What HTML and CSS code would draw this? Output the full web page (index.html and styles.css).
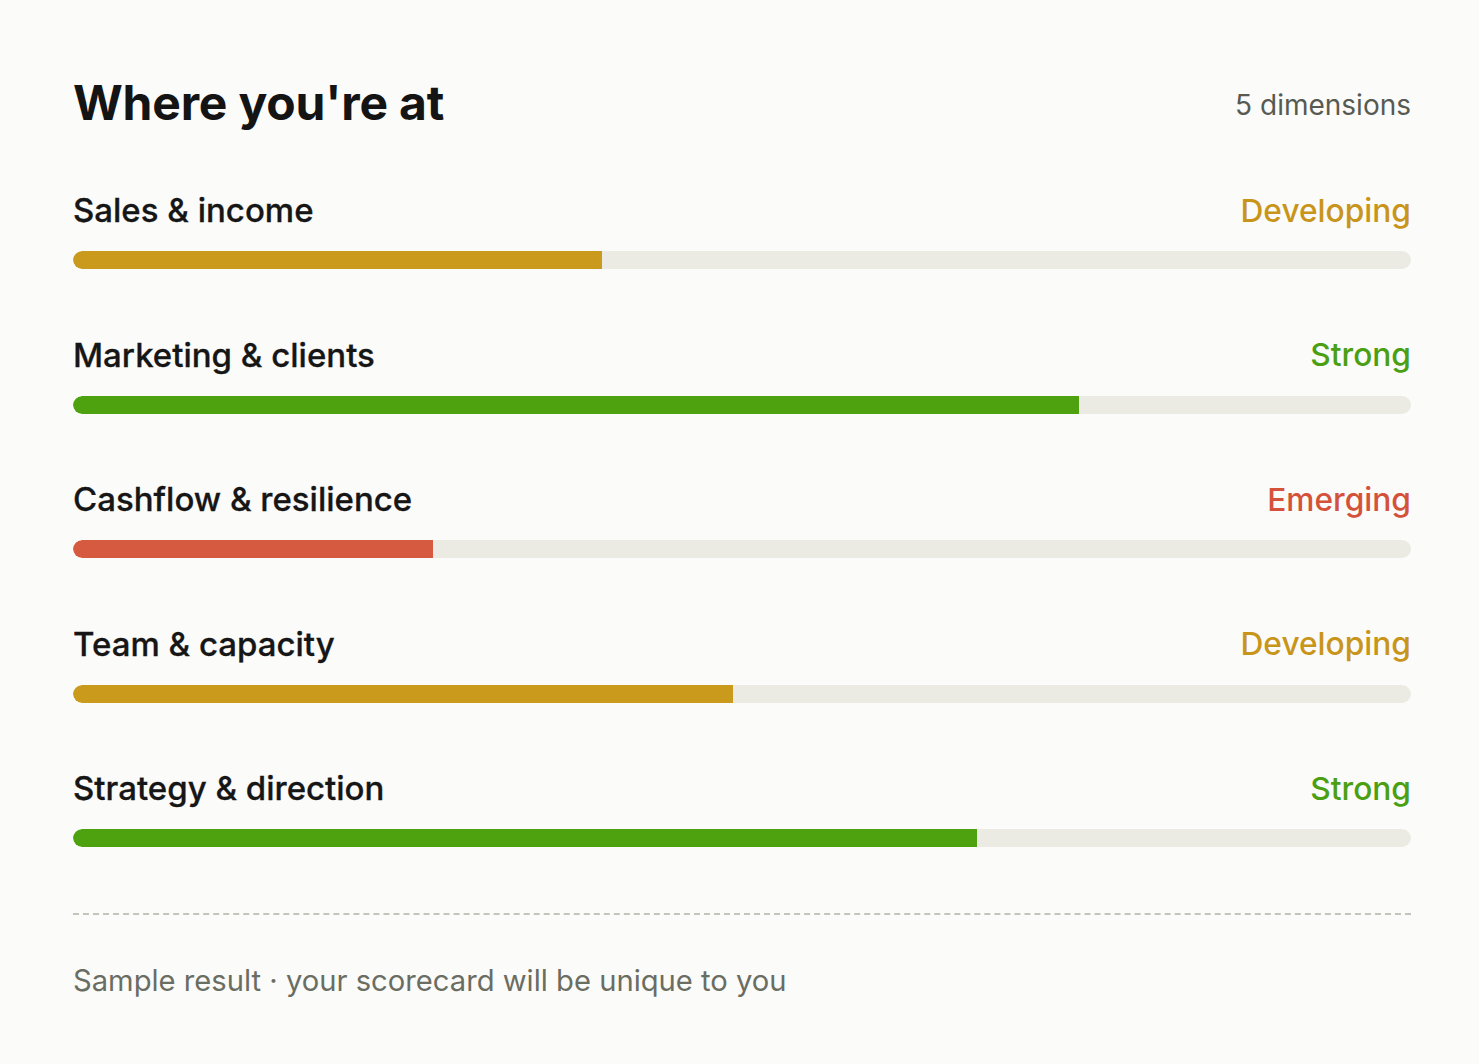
FILE: index.html
```html
<!DOCTYPE html>
<html lang="en">
<head>
<meta charset="utf-8">
<title>Where you're at</title>
<link rel="stylesheet" href="styles.css">
</head>
<body>
<main class="scorecard">
  <header class="head">
    <h1 class="title">Where you're at</h1>
    <span class="count">5 dimensions</span>
  </header>
  <section class="rows">
    <div class="row">
      <div class="row-top"><span class="label">Sales &amp; income</span><span class="status developing">Developing</span></div>
      <div class="track"><div class="fill developing" style="width:39.5%"></div></div>
    </div>
    <div class="row">
      <div class="row-top"><span class="label">Marketing &amp; clients</span><span class="status strong">Strong</span></div>
      <div class="track"><div class="fill strong" style="width:75.2%"></div></div>
    </div>
    <div class="row">
      <div class="row-top"><span class="label">Cashflow &amp; resilience</span><span class="status emerging">Emerging</span></div>
      <div class="track"><div class="fill emerging" style="width:26.9%"></div></div>
    </div>
    <div class="row">
      <div class="row-top"><span class="label">Team &amp; capacity</span><span class="status developing">Developing</span></div>
      <div class="track"><div class="fill developing" style="width:49.3%"></div></div>
    </div>
    <div class="row">
      <div class="row-top"><span class="label">Strategy &amp; direction</span><span class="status strong">Strong</span></div>
      <div class="track"><div class="fill strong" style="width:67.6%"></div></div>
    </div>
  </section>
  <hr class="divider">
  <p class="note">Sample result · your scorecard will be unique to you</p>
</main>
</body>
</html>
```
FILE: styles.css
```css
html, body {
  margin: 0;
  padding: 0;
  background: #fbfbfa;
}
body {
  font-family: "Inter", "Liberation Sans", sans-serif;
  color: #151515;
}
.scorecard {
  padding: 73px 68px 0 73px;
}
.head {
  display: flex;
  justify-content: space-between;
  align-items: center;
  height: 60px;
}
.title {
  margin: 0;
  font-size: 48px;
  font-weight: 700;
  line-height: 60px;
  letter-spacing: -0.2px;
  color: #141414;
}
.count {
  font-size: 28px;
  font-weight: 400;
  color: #575a52;
  margin-top: 4px;
}
.rows {
  display: flex;
  flex-direction: column;
  gap: 65.5px;
  margin-top: 57px;
}
.row {
  display: flex;
  flex-direction: column;
  gap: 21px;
}
.row-top {
  display: flex;
  justify-content: space-between;
  align-items: center;
  height: 40px;
}
.label {
  font-size: 33px;
  font-weight: 500;
  color: #161616;
  -webkit-text-stroke: 0.3px #161616;
}
.status {
  font-size: 31.7px;
  font-weight: 500;
}
.status.developing { color: #c8951a; }
.status.strong { color: #4a9f12; }
.status.emerging { color: #d4523a; }
.track {
  height: 18px;
  border-radius: 9px;
  background: #ecebe3;
  overflow: hidden;
}
.fill {
  height: 100%;
  border-radius: 9px 0 0 9px;
}
.fill.developing { background: #c99a1c; }
.fill.strong { background: #4ea20f; }
.fill.emerging { background: #d65a40; }
.divider {
  margin: 66px 0 0;
  border: 0;
  border-top: 2px dashed #c4c4bd;
  height: 0;
}
.note {
  margin: 46px 0 0;
  font-size: 29.2px;
  line-height: 40px;
  font-weight: 400;
  color: #6a6d62;
}
```
